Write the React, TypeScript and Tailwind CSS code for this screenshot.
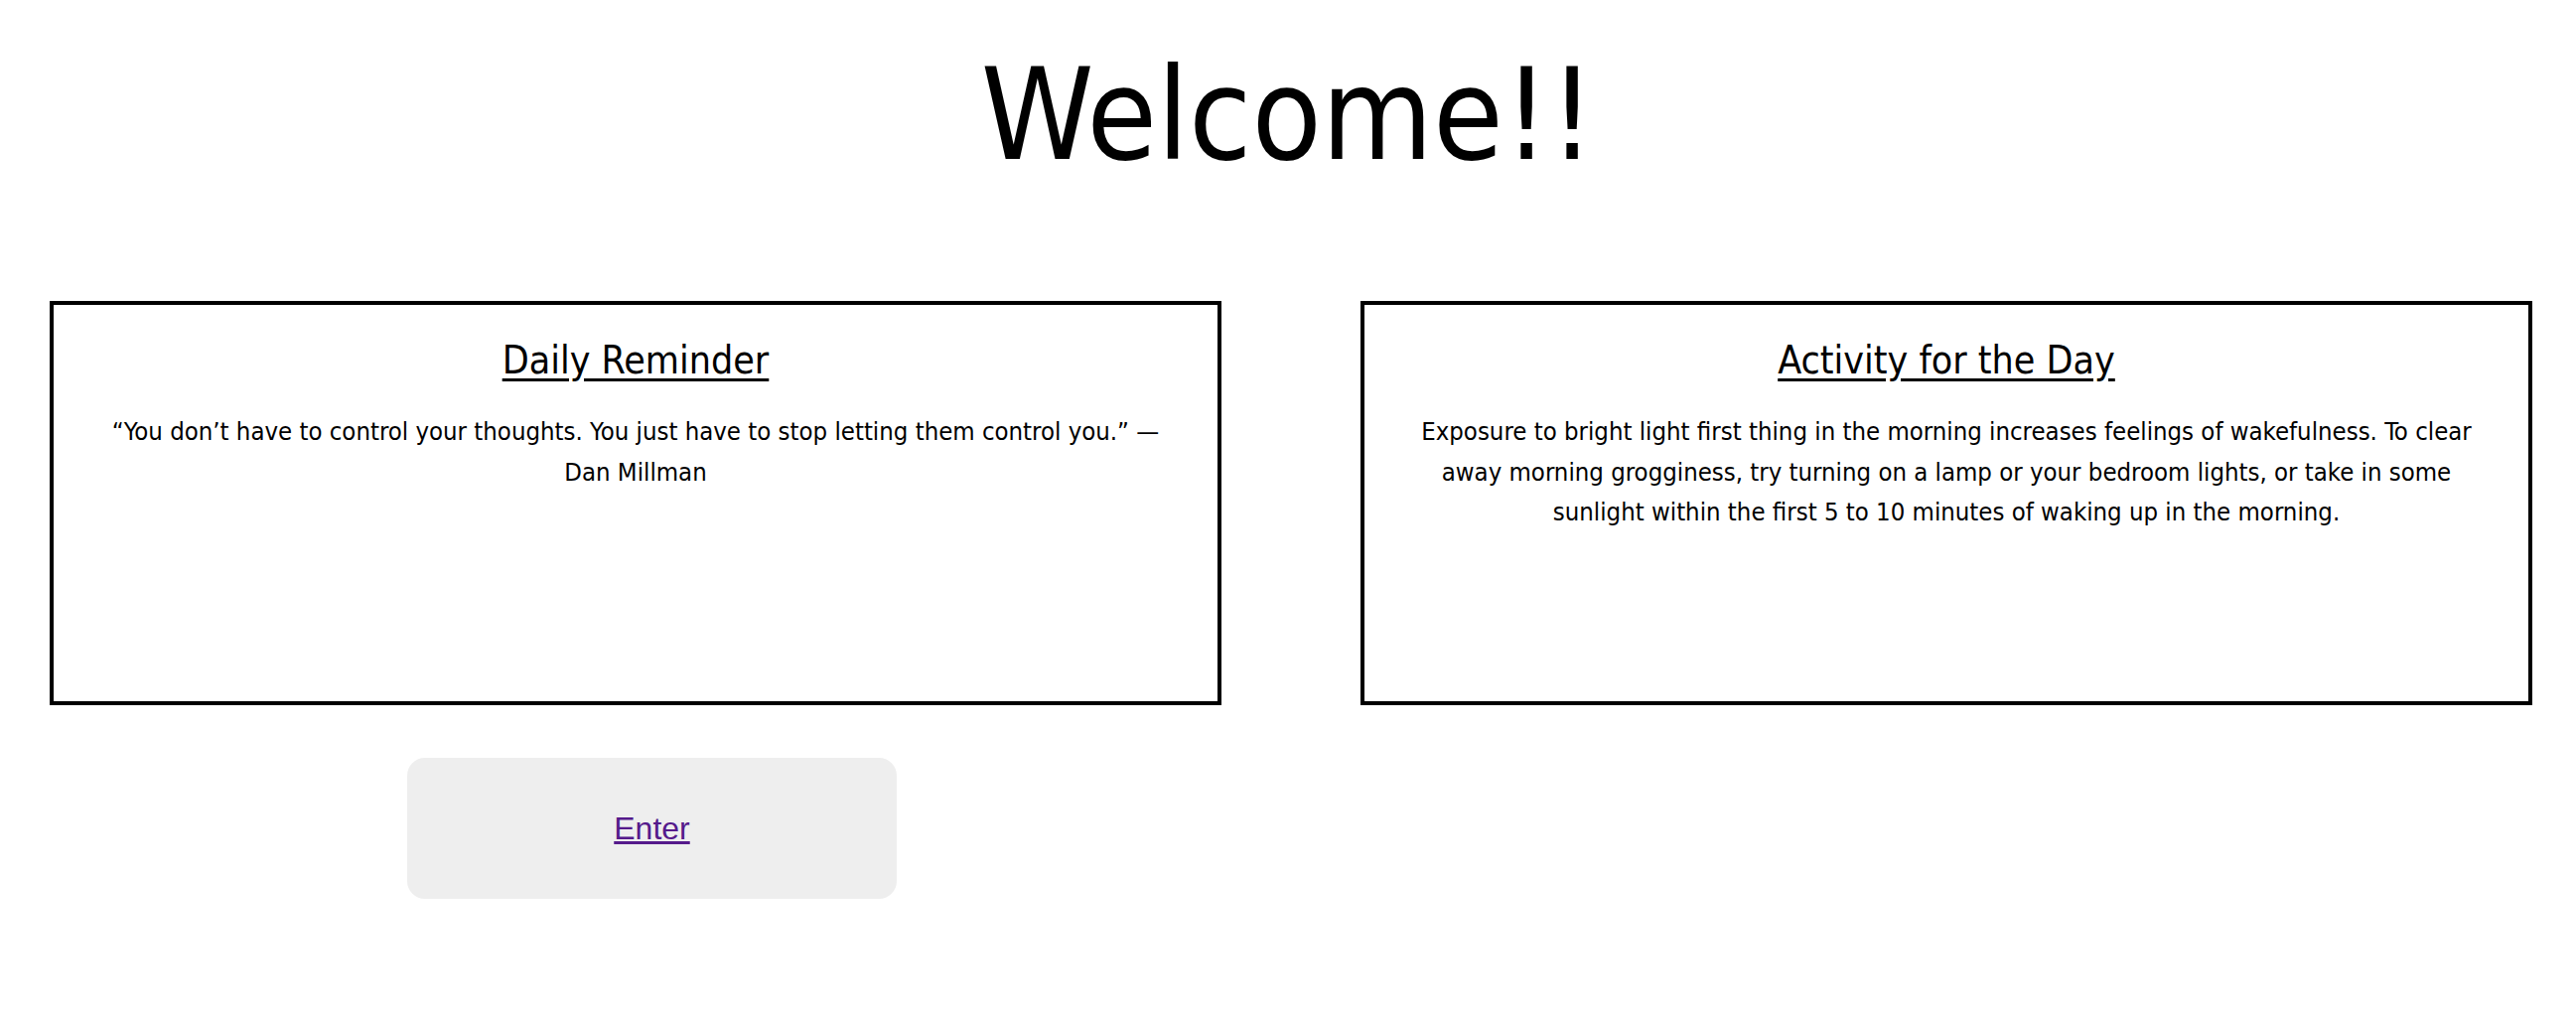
import React from "react"

const cards = [
  {
    title: "Daily Reminder",
    body: "“You don’t have to control your thoughts. You just have to stop letting them control you.” — Dan Millman",
  },
  {
    title: "Activity for the Day",
    body: "Exposure to bright light first thing in the morning increases feelings of wakefulness. To clear away morning grogginess, try turning on a lamp or your bedroom lights, or take in some sunlight within the first 5 to 10 minutes of waking up in the morning.",
  },
]

const App = () => {
  return (
    <main className="min-h-screen w-full bg-white text-black font-['DejaVu_Sans_Condensed','Roboto',sans-serif]">
      <h1 className="pt-[52px] text-center text-[128px] leading-none font-normal">
        Welcome!!
      </h1>

      <div className="mt-[123px] flex flex-row gap-[140px] pl-[50px]">
        {cards.map((card) => (
          <section
            key={card.title}
            className="h-[407px] w-[1180px] border-4 border-black px-[38px] pt-[36px] text-center"
          >
            <h2 className="text-[39px] leading-none font-normal underline underline-offset-[5px]">
              {card.title}
            </h2>
            <p className="mt-[32px] text-[25.5px] leading-[40.5px]">{card.body}</p>
          </section>
        ))}
      </div>

      <div className="ml-[410px] mt-[53px] flex h-[142px] w-[493px] items-center justify-center rounded-[18px] bg-[#eeeeee]">
        <a
          href="#"
          className="font-['Liberation_Sans',Arial,sans-serif] text-[32px] text-[#551a8b] underline"
        >
          Enter
        </a>
      </div>
    </main>
  )
}

export default App
